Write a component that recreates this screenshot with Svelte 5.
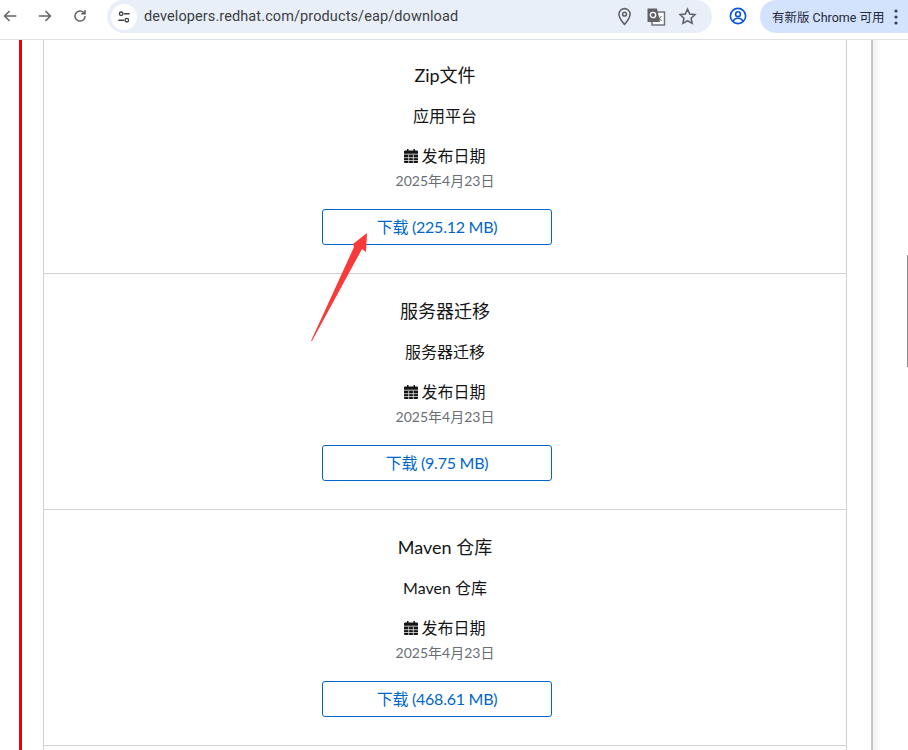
<script lang="ts">
	const rows = [
		{ title: 'Zip文件', sub: '应用平台', size: '225.12 MB' },
		{ title: '服务器迁移', sub: '服务器迁移', size: '9.75 MB' },
		{ title: 'Maven 仓库', sub: 'Maven 仓库', size: '468.61 MB' }
	];
</script>

<div class="page">
	<header class="toolbar">
		<div class="nav">
			<svg class="ic" viewBox="0 0 20 20"><path d="M17 10H4M9.500 4.500 4 10l5.500 5.500" /></svg>
			<svg class="ic" viewBox="0 0 20 20"><path d="M3 10h13M10.500 4.500 16 10l-5.500 5.500" /></svg>
			<svg class="ic" viewBox="0 0 20 20"><path d="M15.600 10a5.600 5.600 0 1 1-1.700-4L15.600 7.600M15.600 3.400v4.200h-4.200" /></svg>
		</div>
		<div class="omnibox">
			<span class="tune">
				<svg viewBox="0 0 20 20"><path d="M10 6h7M3 14h7" /><circle cx="6.500" cy="6" r="2.200" /><circle cx="13.500" cy="14" r="2.200" /></svg>
			</span>
			<span class="url">developers.redhat.com/products/eap/download</span>
			<svg class="act" viewBox="0 0 20 20"><path d="M10 2.500a5.300 5.300 0 0 0-5.300 5.300c0 3.700 5.300 9.700 5.300 9.700s5.300-6 5.300-9.700A5.300 5.300 0 0 0 10 2.500Z" /><circle cx="10" cy="7.800" r="1.800" /></svg>
			<svg class="act trans" viewBox="0 0 20 20">
				<rect x="6" y="5" width="12.500" height="13" fill="#fff" stroke="#70757a" />
				<path d="M1.500 1.500h9.500L14 15H1.500Z" fill="#5f6368" stroke="none" />
				<circle cx="7" cy="8" r="2.700" fill="none" stroke="#fff" stroke-width="1.300" />
				<path d="m11.500 9 4 5M15.500 9l-4 5" stroke="#5f6368" stroke-width="1" />
			</svg>
			<svg class="act star" viewBox="0 0 20 20"><path d="m10 3 2.100 4.600 5 .6-3.700 3.400 1 4.900-4.400-2.500-4.400 2.500 1-4.900-3.700-3.400 5-.6Z" /></svg>
		</div>
		<svg class="profile" viewBox="0 0 20 20">
			<circle cx="10" cy="10" r="7.600" />
			<circle cx="10" cy="8.200" r="2.400" />
			<path d="M5 15c1.200-2 3-2.800 5-2.800s3.800.8 5 2.800" />
		</svg>
		<div class="update">
			<span>有新版 Chrome 可用</span>
			<svg viewBox="0 0 6 18"><circle cx="3" cy="3" r="1.600" /><circle cx="3" cy="9" r="1.600" /><circle cx="3" cy="15" r="1.600" /></svg>
		</div>
	</header>

	<div class="body">
		<div class="rail"></div>
		<main class="card">
			{#each rows as row}
				<section class="row">
					<h3>{row.title}</h3>
					<p class="sub">{row.sub}</p>
					<p class="label">
						<svg viewBox="0 0 14 14"><path d="M0 5.600h14V13a1 1 0 0 1-1 1H1a1 1 0 0 1-1-1ZM1 1.500h2V0h1.500v1.500h5V0H11v1.500h2a1 1 0 0 1 1 1v2.200H0V2.500a1 1 0 0 1 1-1Z" /><path class="grid" d="M0 8.700h14M0 11.500h14M4.700 5.600V14M9.300 5.600V14" /></svg>
						发布日期
					</p>
					<p class="date">2025年4月23日</p>
					<a class="btn" href="#download">下载 ({row.size})</a>
				</section>
			{/each}
		</main>
		<aside class="side">
			<div class="thumb"></div>
		</aside>
	</div>

	<svg class="arrow" viewBox="0 0 80 120"><path d="M57 2 56 21 52 18 2 110 1 110 44 16 43 13Z" /></svg>
</div>

<style>
	:global(body) {
		margin: 0;
		background: #fff;
	}

	.page {
		position: relative;
		width: 908px;
		height: 750px;
		overflow: hidden;
		font-family: "Lato", "Noto Sans CJK SC", sans-serif;
	}

	.toolbar {
		height: 39px;
		display: flex;
		align-items: flex-start;
		border-bottom: 1px solid #dfe1e5;
		background: #fff;
	}

	.nav {
		display: flex;
		flex: none;
		width: 107px;
		padding-top: 7px;
		padding-left: 1px;
		gap: 17px;
		box-sizing: border-box;
	}

	.ic {
		width: 18px;
		height: 18px;
		flex: none;
		fill: none;
		stroke: #5f6368;
		stroke-width: 1.700;
	}

	.omnibox {
		width: 605px;
		height: 33px;
		flex: none;
		display: flex;
		align-items: center;
		background: #e9eff9;
		border-radius: 17px;
		box-sizing: border-box;
		padding-left: 4px;
	}

	.tune {
		width: 26px;
		height: 26px;
		border-radius: 50%;
		background: #fff;
		display: flex;
		align-items: center;
		justify-content: center;
		flex: none;
	}

	.tune svg {
		width: 16px;
		height: 16px;
		fill: none;
		stroke: #3c4043;
		stroke-width: 1.700;
	}

	.url {
		margin-left: 7px;
		width: 470px;
		flex: none;
		font-family: "Roboto", sans-serif;
		font-size: 14.500px;
		letter-spacing: 0.1px;
		color: #3c4043;
		white-space: nowrap;
	}

	.act {
		width: 21px;
		height: 21px;
		flex: none;
		margin-right: 11px;
		fill: none;
		stroke: #5f6368;
		stroke-width: 1.500;
	}

	.trans {
		width: 20px;
		height: 20px;
	}

	.profile {
		width: 20px;
		height: 20px;
		margin: 6px 0 0 16px;
		fill: none;
		stroke: #0b57d0;
		stroke-width: 1.600;
		flex: none;
	}

	.update {
		flex: none;
		width: 160px;
		height: 33px;
		margin-left: 12px;
		border-radius: 17px 0 0 17px;
		background: #d3e3fd;
		display: flex;
		align-items: center;
		padding-left: 12px;
		box-sizing: border-box;
		font-size: 12.500px;
		color: #1f2937;
		font-family: "Roboto", "Noto Sans CJK SC", sans-serif;
		white-space: nowrap;
	}

	.update svg {
		width: 6px;
		height: 18px;
		margin-left: 8px;
		fill: #334155;
		flex: none;
	}

	.body {
		display: flex;
		height: 710px;
	}

	.rail {
		width: 3px;
		margin-left: 19px;
		background: #ee0000;
		flex: none;
	}

	.card {
		width: 804px;
		margin-left: 21px;
		flex: none;
		border-left: 1px solid #d2d2d2;
		border-right: 1px solid #d2d2d2;
		box-sizing: border-box;
	}

	.row {
		height: 236px;
		box-sizing: border-box;
		border-bottom: 1px solid #d2d2d2;
		padding-top: 23px;
		display: flex;
		flex-direction: column;
		align-items: center;
		color: #151515;
	}

	.row:first-child {
		height: 234px;
		padding-top: 21px;
	}

	h3 {
		margin: 0;
		font-size: 18px;
		font-weight: 400;
		line-height: 28px;
	}

	.sub {
		margin: 15px 0 0;
		font-size: 16px;
		line-height: 24px;
	}

	.label {
		margin: 16px 0 0;
		font-size: 16px;
		line-height: 24px;
		display: flex;
		align-items: center;
		gap: 3px;
	}

	.label svg {
		width: 14px;
		height: 14px;
		fill: #151515;
		flex: none;
	}

	.grid {
		fill: none;
		stroke: #fff;
		stroke-width: 0.700;
	}

	.date {
		margin: 1px 0 0;
		font-size: 14px;
		line-height: 24px;
		color: #6a6e73;
	}

	.btn {
		margin: 16px 16px 0 0;
		width: 230px;
		height: 36px;
		box-sizing: border-box;
		padding-bottom: 2px;
		border: 1px solid #0066cc;
		border-radius: 3px;
		color: #0066cc;
		font-size: 16px;
		letter-spacing: -0.25px;
		display: flex;
		align-items: center;
		justify-content: center;
		text-decoration: none;
	}

	.side {
		position: relative;
		flex: 1;
		margin-left: 24px;
		border-left: 2px solid #c6c6c6;
		background: linear-gradient(to right, #f1f1f1, #fff 8px);
	}

	.thumb {
		position: absolute;
		right: 0;
		top: 215px;
		width: 1px;
		height: 112px;
		background: #8a8a8a;
	}

	.arrow {
		position: absolute;
		left: 310px;
		top: 231px;
		width: 80px;
		height: 120px;
		fill: #f93a3a;
	}
</style>
